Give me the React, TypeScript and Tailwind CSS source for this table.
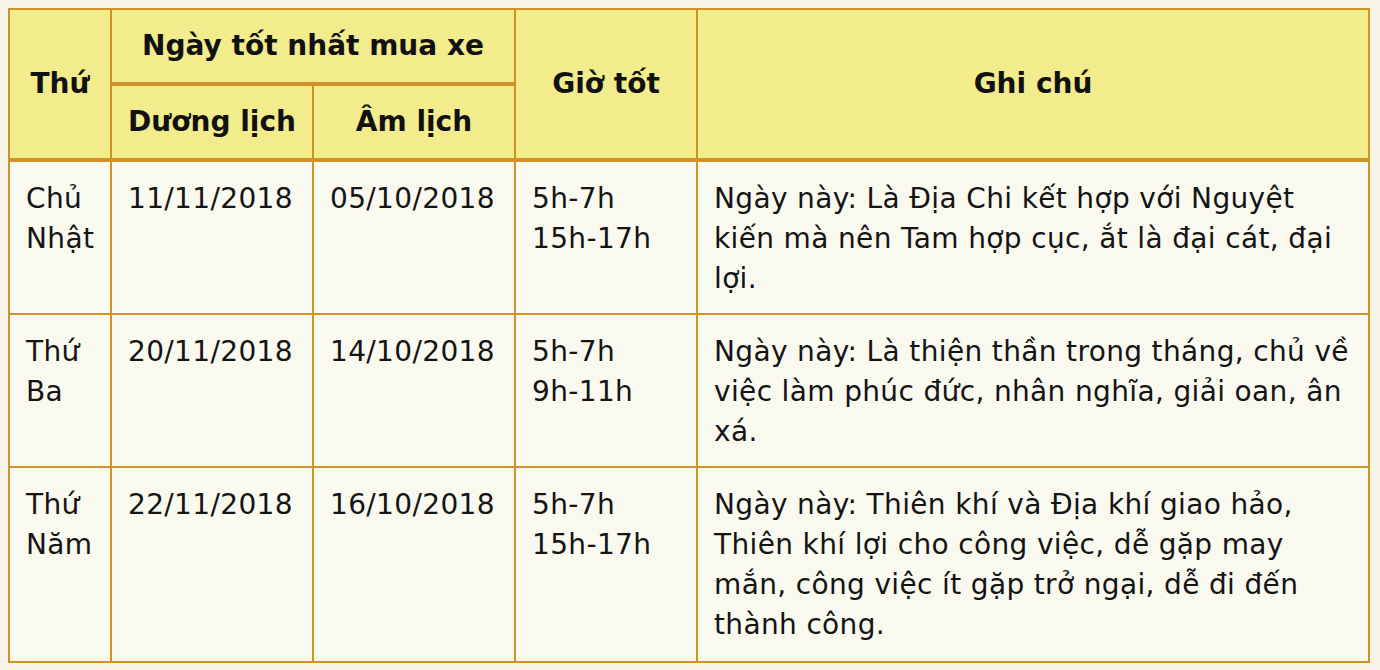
const rows = [
  {
    day: ["Chủ", "Nhật"],
    solar: "11/11/2018",
    lunar: "05/10/2018",
    hours: ["5h-7h", "15h-17h"],
    note: "Ngày này: Là Địa Chi kết hợp với Nguyệt kiến mà nên Tam hợp cục, ắt là đại cát, đại lợi.",
  },
  {
    day: ["Thứ", "Ba"],
    solar: "20/11/2018",
    lunar: "14/10/2018",
    hours: ["5h-7h", "9h-11h"],
    note: "Ngày này: Là thiện thần trong tháng, chủ về việc làm phúc đức, nhân nghĩa, giải oan, ân xá.",
  },
  {
    day: ["Thứ", "Năm"],
    solar: "22/11/2018",
    lunar: "16/10/2018",
    hours: ["5h-7h", "15h-17h"],
    note: "Ngày này: Thiên khí và Địa khí giao hảo, Thiên khí lợi cho công việc, dễ gặp may mắn, công việc ít gặp trở ngại, dễ đi đến thành công.",
  },
];

const th =
  "border-2 border-b-4 border-[#cf9128] bg-[#f2ec8c] px-4 py-4 text-center align-middle font-bold text-[28px] leading-[40px] text-[#111]";
const td =
  "border-2 border-[#cf9128] px-4 pt-[17px] pb-[14px] text-left align-top text-[28px] leading-[40px] tracking-[0.35px] text-[#141414]";

export default function App() {
  return (
    <div
      className="min-h-screen w-full bg-[#f7f5e8] p-2"
      style={{ fontFamily: '"DejaVu Sans", Verdana, sans-serif' }}
    >
      <table className="w-[1360px] table-fixed border-collapse bg-[#faf9ef]">
        <colgroup>
          <col className="w-[102px]" />
          <col className="w-[202px]" />
          <col className="w-[202px]" />
          <col className="w-[182px]" />
          <col className="w-[672px]" />
        </colgroup>
        <thead>
          <tr>
            <th rowSpan={2} className={th}>
              Thứ
            </th>
            <th colSpan={2} className={th}>
              Ngày tốt nhất mua xe
            </th>
            <th rowSpan={2} className={th}>
              Giờ tốt
            </th>
            <th rowSpan={2} className={th}>
              Ghi chú
            </th>
          </tr>
          <tr>
            <th className={th}>Dương lịch</th>
            <th className={th}>Âm lịch</th>
          </tr>
        </thead>
        <tbody>
          {rows.map((r, i) => (
            <tr key={r.solar} className={i === rows.length - 1 ? "[&>td]:pb-4" : ""}>
              <td className={td}>
                {r.day[0]}
                <br />
                {r.day[1]}
              </td>
              <td className={td}>{r.solar}</td>
              <td className={td}>{r.lunar}</td>
              <td className={td}>
                {r.hours[0]}
                <br />
                {r.hours[1]}
              </td>
              <td className={td}>{r.note}</td>
            </tr>
          ))}
        </tbody>
      </table>
    </div>
  );
}
